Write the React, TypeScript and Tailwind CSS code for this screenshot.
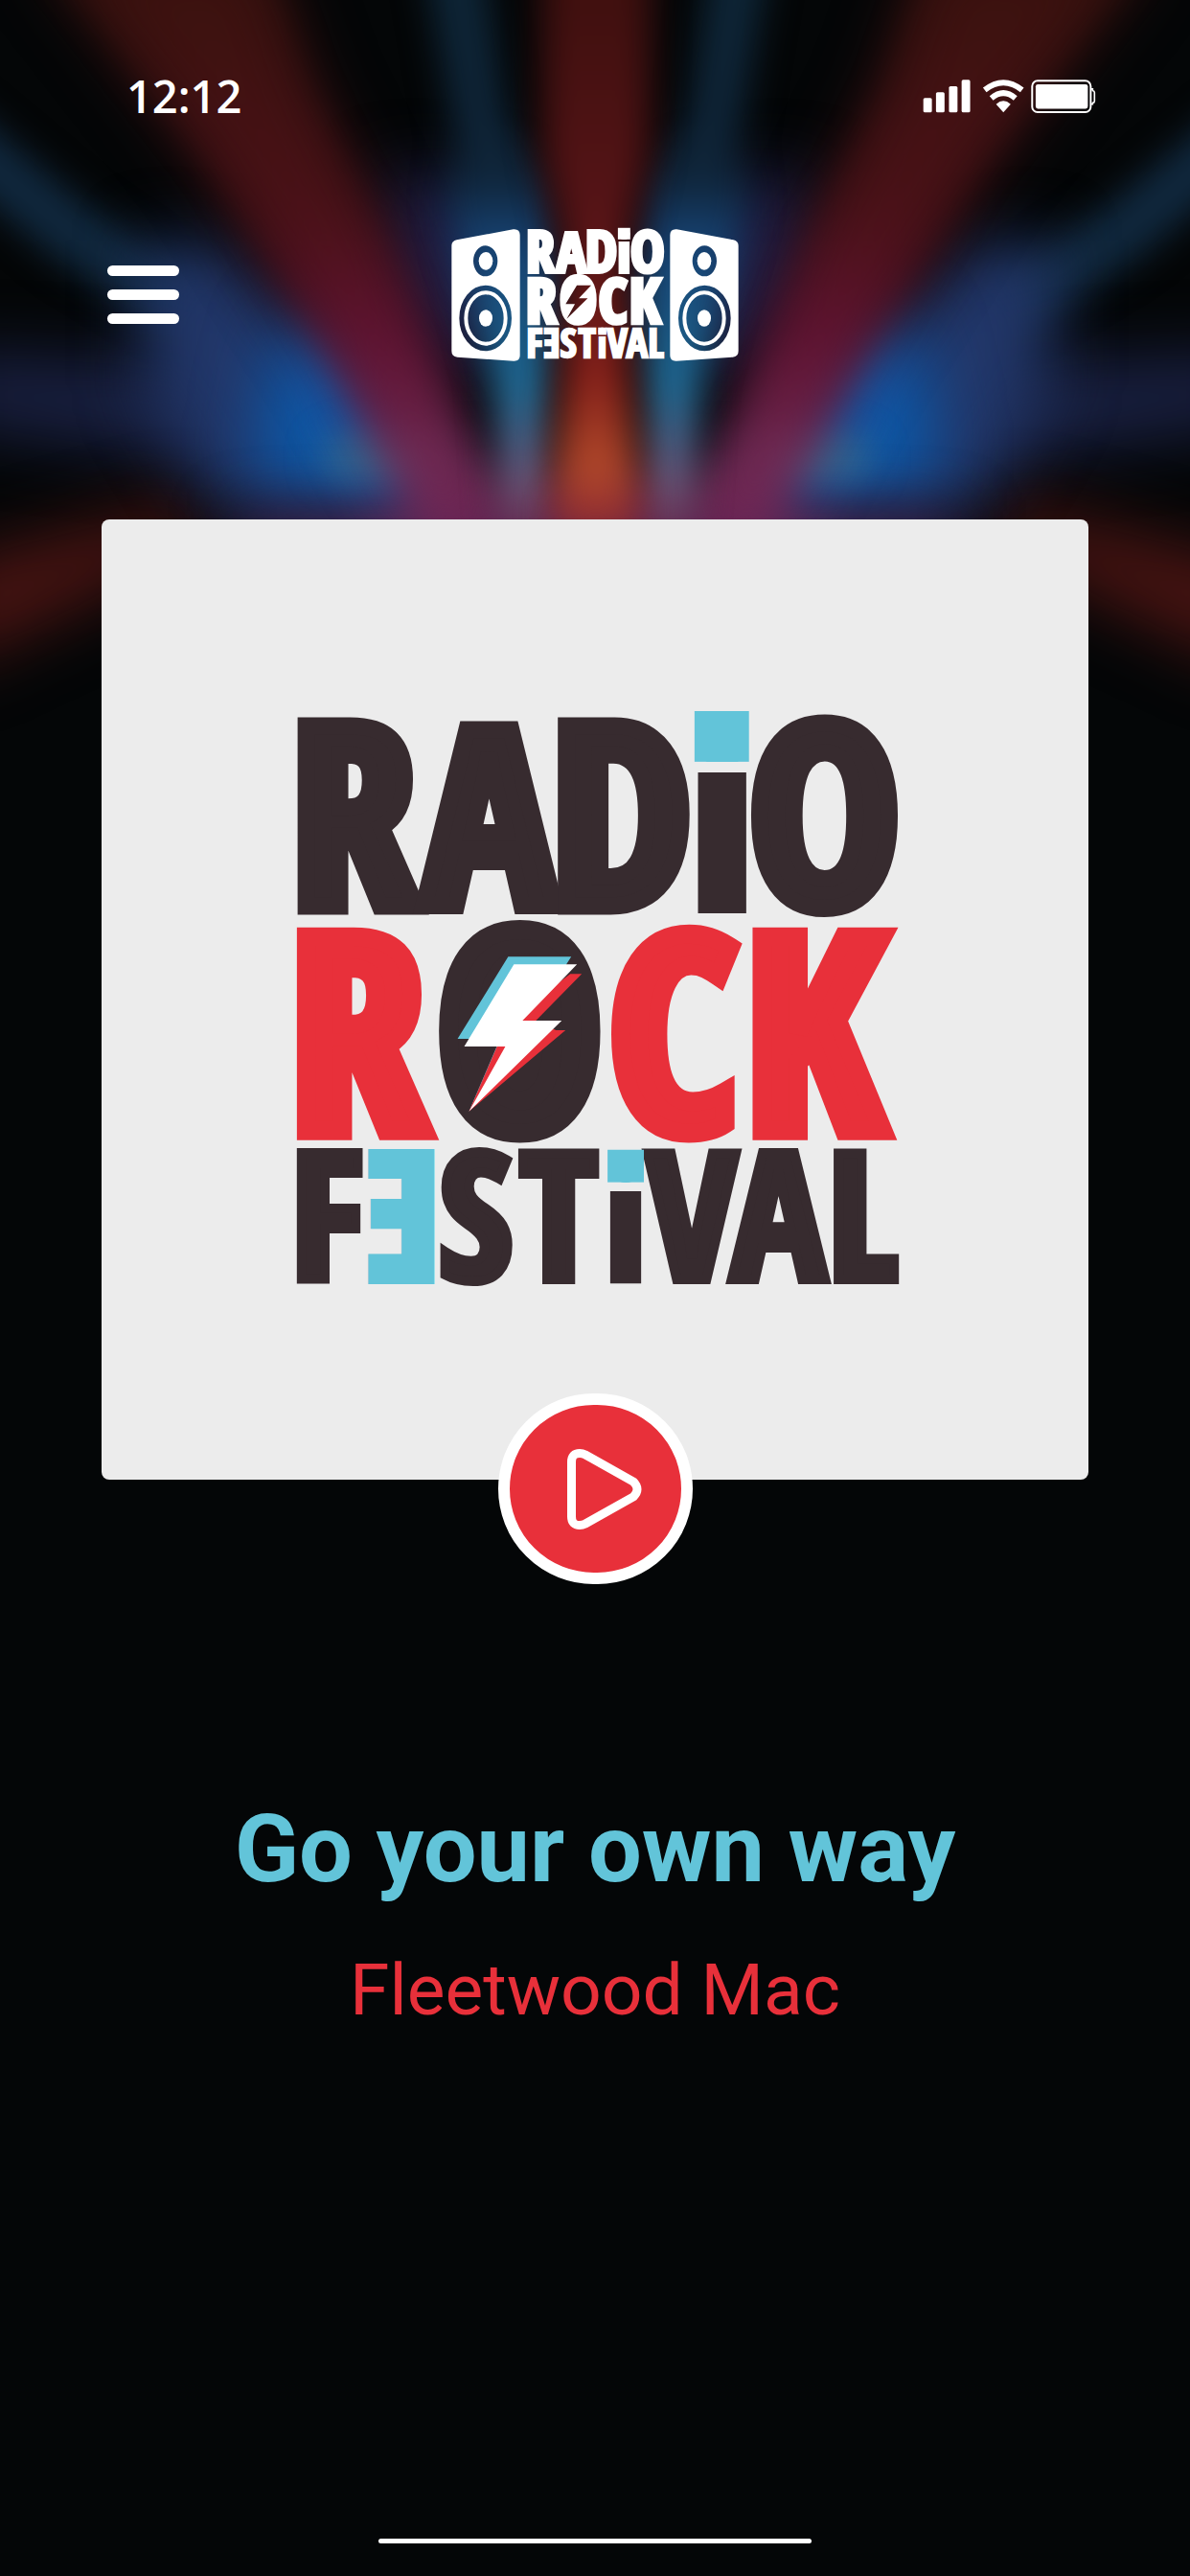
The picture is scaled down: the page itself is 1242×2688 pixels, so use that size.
import { useId } from 'react';

type WordmarkColors = { ink: string; accent: string; sky: string };

const brandColors: WordmarkColors = { ink: '#372b2f', accent: '#e8303a', sky: '#62c4d9' };
const whiteColors: WordmarkColors = { ink: '#fff', accent: '#fff', sky: '#fff' };

const BOLT = '256,283 322,283 265,342 306,342 209,437 247,369 204,369';

function Wordmark({ colors, mono = false }: { colors: WordmarkColors; mono?: boolean }) {
  const id = useId();
  const { ink, accent, sky } = colors;

  return (
    <g
      className="font-['Open_Sans_Condensed','Roboto_Condensed',sans-serif] font-extrabold"
      strokeLinejoin="miter"
      strokeMiterlimit="3"
      textAnchor="middle"
    >
      <defs>
        {/* dot and stem of each "i" with a clear gap between them */}
        <linearGradient id={`${id}i1`} gradientUnits="userSpaceOnUse" x1="0" x2="0" y1="0" y2="100">
          <stop offset="0.71" stopColor={sky} />
          <stop offset="0.71" stopColor={ink} stopOpacity="0" />
          <stop offset="0.82" stopColor={ink} stopOpacity="0" />
          <stop offset="0.82" stopColor={ink} />
        </linearGradient>
        <linearGradient id={`${id}i2`} gradientUnits="userSpaceOnUse" x1="0" x2="0" y1="460" y2="560">
          <stop offset="0.51" stopColor={sky} />
          <stop offset="0.51" stopColor={ink} stopOpacity="0" />
          <stop offset="0.6" stopColor={ink} stopOpacity="0" />
          <stop offset="0.6" stopColor={ink} />
        </linearGradient>
        <mask id={`${id}bolt`} maskUnits="userSpaceOnUse" x="0" y="200" width="660" height="300">
          <rect x="0" y="200" width="660" height="300" fill="#fff" />
          <polygon points={BOLT} fill="#000" />
        </mask>
      </defs>

      <text y="222" fontSize="264" fill={ink} stroke={ink} strokeWidth="18">
        <tspan x="88">R</tspan>
        <tspan x="230" fontSize="256">A</tspan>
        <tspan x="368">D</tspan>
        <tspan x="474" fontSize="250" fill={`url(#${id}i1)`} stroke={`url(#${id}i1)`}>i</tspan>
        <tspan x="581">O</tspan>
      </text>
      <rect x="445" y="18" width="57" height="53" fill={sky} />

      <g mask={mono ? `url(#${id}bolt)` : undefined}>
        <ellipse cx="262" cy="349" rx="66" ry="96" fill={ink} />
        <text y="457" fontSize="284" fill={accent} stroke={accent} strokeWidth="20">
          <tspan x="92">R</tspan>
          <tspan x="262" fontSize="290" fill={ink} stroke={ink}>O</tspan>
          <tspan x="422">C</tspan>
          <tspan x="570">K</tspan>
        </text>
      </g>
      {!mono && (
        <>
          <polygon points="250,275 316,275 300,300 238,369 228,361 197,361" fill={sky} />
          <polygon points="238,369 250,369 209,437" fill={sky} />
          <polygon points="315,293 327,293 279,342 300,352 310,352 209,437 250,342" fill={accent} />
          <polygon points={BOLT} fill="#fff" />
        </>
      )}

      <text y="613" fontSize="184" fill={ink} stroke={ink} strokeWidth="10">
        <tspan x="60">F</tspan>
      </text>
      <text x="-140" y="613" fontSize="184" fill={sky} stroke={sky} strokeWidth="10" transform="scale(-1 1)">E</text>
      <text y="613" fontSize="184" fill={ink} stroke={ink} strokeWidth="10">
        <tspan x="216">S</tspan>
        <tspan x="303">T</tspan>
        <tspan x="373" fontSize="172" fill={`url(#${id}i2)`} stroke={`url(#${id}i2)`}>i</tspan>
        <tspan x="442">V</tspan>
        <tspan x="533">A</tspan>
        <tspan x="621">L</tspan>
      </text>
      <rect x="354" y="477" width="38" height="34" fill={sky} />
    </g>
  );
}

function Speaker() {
  return (
    <>
      <path
        fill="#fff"
        fillRule="evenodd"
        d="M110 93 287 60Q308 58 308 78V455Q308 473 288 472L112 460Q94 459 94 441V112Q94 96 110 93Z
           M162 159a38 48 0 1 0 76 0a38 48 0 1 0-76 0Z
           M118 338a82 103 0 1 0 164 0a82 103 0 1 0-164 0Z"
      />
      <ellipse cx="201" cy="159" rx="22" ry="28" fill="#fff" />
      <ellipse cx="201" cy="338" rx="62" ry="80" fill="none" stroke="#fff" strokeWidth="12" />
      <ellipse cx="201" cy="338" rx="21" ry="26" fill="#fff" />
    </>
  );
}

function HeaderLogo() {
  return (
    <svg viewBox="93 53 900 420" className="h-[140px] w-[300px] overflow-visible" role="img" aria-label="Radio Rock Festival">
      <Speaker />
      <svg x="330" y="53" width="428" height="415" viewBox="26 18 630 604" overflow="visible">
        <Wordmark colors={whiteColors} mono />
      </svg>
      <g transform="matrix(-1 0 0 1 1086 0)">
        <Speaker />
      </g>
    </svg>
  );
}

function StageLights() {
  return (
    <svg
      viewBox="0 0 1242 900"
      className="pointer-events-none absolute inset-x-0 top-0 w-full"
      aria-hidden="true"
    >
      <defs>
        <filter id="soft" filterUnits="userSpaceOnUse" x="-200" y="-200" width="1640" height="1300" colorInterpolationFilters="sRGB">
          <feGaussianBlur stdDeviation="18" />
        </filter>
        <filter id="softer" filterUnits="userSpaceOnUse" x="-200" y="-200" width="1640" height="1300" colorInterpolationFilters="sRGB">
          <feGaussianBlur stdDeviation="34" />
        </filter>
        <linearGradient id="redBeam" gradientUnits="userSpaceOnUse" x1="0" y1="0" x2="0" y2="560">
          <stop offset="0" stopColor="#3c120f" />
          <stop offset="0.4" stopColor="#4c1218" />
          <stop offset="0.65" stopColor="#661434" />
          <stop offset="0.9" stopColor="#7c2a54" />
          <stop offset="1" stopColor="#6a2256" />
        </linearGradient>
        <linearGradient id="centerBeam" gradientUnits="userSpaceOnUse" x1="0" y1="0" x2="0" y2="560">
          <stop offset="0" stopColor="#40100f" />
          <stop offset="0.4" stopColor="#561417" />
          <stop offset="0.7" stopColor="#84201a" />
          <stop offset="0.87" stopColor="#b0482a" />
          <stop offset="1" stopColor="#882634" />
        </linearGradient>
        <linearGradient id="blueBeam" gradientUnits="userSpaceOnUse" x1="0" y1="0" x2="0" y2="560">
          <stop offset="0" stopColor="#0e2638" />
          <stop offset="0.33" stopColor="#0f2438" />
          <stop offset="0.45" stopColor="#174272" />
          <stop offset="0.72" stopColor="#1f6a94" />
          <stop offset="0.9" stopColor="#6b587a" />
          <stop offset="1" stopColor="#6a2c50" />
        </linearGradient>
        <g id="lightSide">
          <polygon points="-60,90 -60,170 60,270 190,350 215,300 90,215" fill="#10283e" filter="url(#soft)" />
          <polygon points="-60,370 -60,440 260,490 280,420 150,380" fill="#1a2144" filter="url(#softer)" />
          <polygon points="-60,590 -60,700 110,620 220,550 200,520" fill="#4a1412" filter="url(#softer)" />
          <polygon points="400,180 520,190 560,330 480,400 400,300" fill="#1e1d42" filter="url(#softer)" />
          <polygon points="150,250 240,260 470,520 230,530 150,400" fill="#22376a" filter="url(#softer)" />
          <polygon points="300,330 350,340 480,520 270,510 270,440" fill="#0c58a8" filter="url(#softer)" />
          <ellipse cx="390" cy="478" rx="55" ry="26" fill="#2c6a94" filter="url(#soft)" />
          <rect x="250" y="545" width="380" height="60" fill="#50285c" filter="url(#softer)" />
          <polygon points="40,-60 270,-60 320,90 400,250 520,560 450,560 360,390 220,170" fill="url(#redBeam)" filter="url(#soft)" opacity="0.55" />
          <polygon points="40,-60 270,-60 320,90 400,250 520,560 450,560 360,390 220,170" fill="url(#redBeam)" filter="url(#softer)" />
          <polygon points="440,-60 500,-60 528,120 570,190 575,300 568,560 525,560 515,400 465,210 476,150" fill="url(#blueBeam)" filter="url(#soft)" />
        </g>
      </defs>
      <rect x="380" y="500" width="480" height="100" fill="#6a2448" filter="url(#softer)" />
      <use href="#lightSide" />
      <use href="#lightSide" transform="matrix(-1 0 0 1 1246 0)" />
      <polygon points="566,-60 680,-60 678,160 650,280 668,560 576,560 594,280 566,160" fill="url(#centerBeam)" filter="url(#soft)" />
    </svg>
  );
}

function StatusBar() {
  return (
    <div className="flex h-12 items-center justify-between pr-[98px] pl-[132px]">
      <time className="font-['Open_Sans',sans-serif] text-[47px] leading-[48px] font-semibold">12:12</time>
      <svg viewBox="69 71 544 106" className="h-[35px] w-[181px]" fill="#fff" role="img" aria-label="Signal, Wi-Fi, battery">
        <rect x="69" y="129" width="27" height="46" rx="5" />
        <rect x="109" y="111" width="27" height="64" rx="5" />
        <rect x="150" y="92" width="27" height="83" rx="5" />
        <rect x="190" y="72" width="27" height="103" rx="5" />
        <g fill="none" stroke="#fff" strokeWidth="18">
          <path d="M263 104Q322 58 381 104" />
          <path d="M284 130Q322 98 360 130" />
        </g>
        <path d="M299 149Q322 128 345 149L322 175Z" />
        <rect x="413" y="75" width="185" height="99" rx="17" fill="none" stroke="#fff" strokeWidth="6" />
        <rect x="424" y="86" width="165" height="77" rx="7" />
        <path d="M598 101H604V106Q610 107 610 112V139Q610 144 604 145V149H598" fill="none" stroke="#fff" strokeWidth="5" />
      </svg>
    </div>
  );
}

function Header() {
  return (
    <header className="mt-[113px] grid grid-cols-[1fr_auto_1fr] items-center px-28">
      <button type="button" aria-label="Open menu" className="flex w-[75px] flex-col gap-[14px]">
        <span className="h-[11px] w-full rounded-full bg-white" />
        <span className="h-[11px] w-full rounded-full bg-white" />
        <span className="h-[11px] w-full rounded-full bg-white" />
      </button>
      <HeaderLogo />
    </header>
  );
}

export default function App() {
  return (
    <div className="relative flex min-h-screen flex-col overflow-hidden bg-[#040607] font-['Roboto',sans-serif] text-white">
      <StageLights />
      <div className="relative flex flex-1 flex-col pt-[76px] pb-[34px]">
        <StatusBar />
        <Header />

        <main className="mt-[165px] flex flex-col items-center px-[106px]">
          <div className="flex aspect-[1030/1002] w-full items-center justify-center rounded-lg bg-[#ececec]">
            <svg viewBox="26 18 630 604" className="w-[61%] overflow-visible" role="img" aria-label="Radio Rock Festival cover">
              <Wordmark colors={brandColors} />
            </svg>
          </div>

          <button
            type="button"
            aria-label="Play"
            className="-mt-[90px] flex h-[199px] w-[203px] items-center justify-center rounded-full border-12 border-white bg-[#e8303a]"
          >
            <svg viewBox="0 0 78 84" className="ml-5 h-[84px] w-[78px]" fill="none" stroke="#fff" strokeWidth="9">
              <path d="M4.500 13.500Q4.500 4.500 13 4.500Q16 4.500 19 6L69 34Q77 42 69 50L19 78Q16 79.500 13 79.500Q4.500 79.500 4.500 70.500Z" />
            </svg>
          </button>

          <h1 className="mt-[216px] text-[99px] leading-[120px] font-bold text-[#62c4d9]">Go your own way</h1>
          <p className="mt-[42px] text-[75px] leading-[90px] text-[#e8303a]">Fleetwood Mac</p>
        </main>

        <div className="mx-auto mt-auto h-[5px] w-[452px] rounded-full bg-white" />
      </div>
    </div>
  );
}
